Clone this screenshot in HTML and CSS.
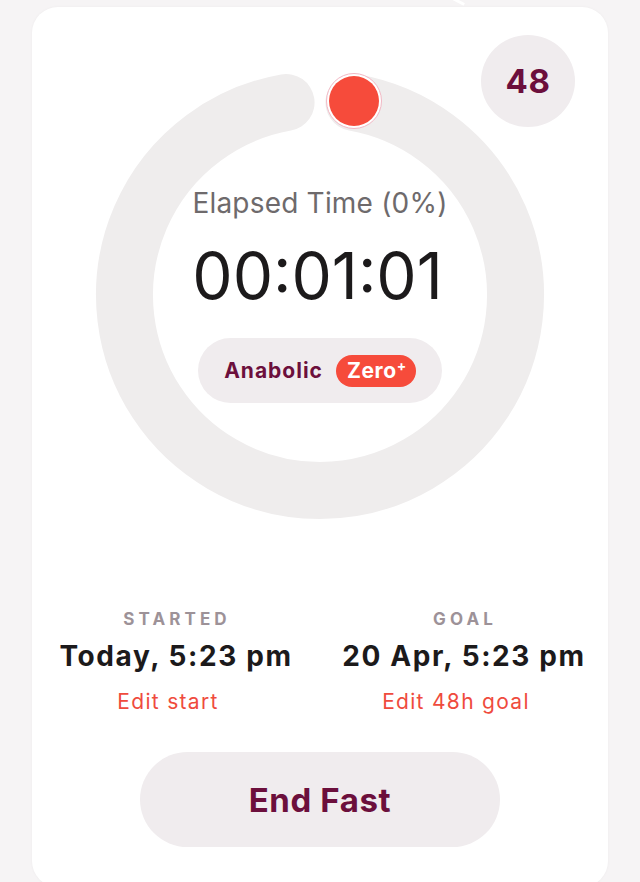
FILE: index.html
```html
<!DOCTYPE html>
<html>
<head>
<meta charset="utf-8">
<link rel="stylesheet" href="styles.css">
</head>
<body>
<div class="streak"></div>
<main class="card">
  <div class="goal-badge">48</div>
  <section class="dial">
    <svg class="ring" width="460" height="460" viewBox="0 0 460 460">
      <path d="M263.95 37.47 A195.5 195.5 0 1 1 196.05 37.47" fill="none" stroke="#efeded" stroke-width="57" stroke-linecap="round"/>
      <circle cx="264" cy="36" r="27.5" fill="#fff" stroke="#f2b8c4" stroke-width="1"/>
      <circle cx="264" cy="36" r="25" fill="#f64b3b"/>
    </svg>
    <div class="dial-info">
      <div class="elapsed">Elapsed Time (0%)</div>
      <div class="clock">00:01:01</div>
      <div class="stage"><span class="stage-name">Anabolic</span><span class="zero">Zero<sup>+</sup></span></div>
    </div>
  </section>
  <section class="times">
    <div class="col">
      <div class="label">STARTED</div>
      <div class="value">Today, 5:23 pm</div>
      <div class="edit">Edit start</div>
    </div>
    <div class="col">
      <div class="label">GOAL</div>
      <div class="value">20 Apr, 5:23 pm</div>
      <div class="edit">Edit 48h goal</div>
    </div>
  </section>
  <button class="end">End Fast</button>
</main>
</body>
</html>
```

FILE: styles.css
```css
* { box-sizing: border-box; }
html, body { margin: 0; padding: 0; }
body {
  background: #f6f4f5;
  font-family: Inter, "Noto Sans", sans-serif;
  width: 640px;
  height: 882px;
  overflow: hidden;
  position: relative;
}
.streak {
  position: absolute;
  left: 436px;
  top: -4px;
  width: 30px;
  height: 3px;
  background: #fff;
  transform: rotate(28deg);
}
.card {
  position: relative;
  margin: 7px 32px 0;
  width: 576px;
  height: 880px;
  background: #fff;
  border-radius: 26px;
  box-shadow: 0 0 3px rgba(0,0,0,0.04);
  display: flex;
  flex-direction: column;
  align-items: center;
}
.goal-badge {
  position: absolute;
  right: 33px;
  top: 28px;
  width: 94px;
  height: 92px;
  border-radius: 50%;
  background: #f0ecee;
  color: #6c0f3c;
  font-weight: 700;
  font-size: 33px;
  letter-spacing: 0.5px;
  display: flex;
  align-items: center;
  justify-content: center;
}
.dial {
  margin-top: 58px;
  display: grid;
  width: 460px;
  height: 460px;
}
.ring, .dial-info { grid-area: 1 / 1; }
.dial-info {
  display: flex;
  flex-direction: column;
  align-items: center;
  padding-top: 122px;
}
.elapsed {
  font-size: 28px;
  color: #6e6a6c;
  line-height: 32px;
  letter-spacing: 0.2px;
}
.clock {
  font-size: 64px;
  color: #1c1a1b;
  line-height: 74px;
  margin-top: 20px;
  margin-right: 5px;
  letter-spacing: 0px;
}
.stage {
  margin-top: 25px;
  width: 244px;
  height: 65px;
  border-radius: 33px;
  background: #f0ecee;
  display: flex;
  align-items: center;
  justify-content: center;
  gap: 13px;
}
.stage-name {
  color: #6c0f3c;
  font-weight: 700;
  font-size: 21px;
  letter-spacing: 1px;
}
.zero {
  background: #f64b3b;
  color: #fff;
  font-weight: 700;
  font-size: 21px;
  letter-spacing: 0.6px;
  height: 32px;
  padding: 0 9px 0 11px;
  border-radius: 16px;
  display: flex;
  align-items: center;
}
.zero sup { font-size: 14px; position: relative; top: -5px; vertical-align: baseline; }
.times {
  margin-top: 84px;
  width: 100%;
  display: grid;
  grid-template-columns: 1fr 1fr;
}
.col {
  display: flex;
  flex-direction: column;
  align-items: center;
}
.label {
  font-size: 17px;
  font-weight: 700;
  letter-spacing: 4.1px;
  margin-right: -2px;
  color: #9d9298;
  line-height: 20px;
}
.value {
  margin-top: 10px;
  font-size: 28px;
  font-weight: 700;
  color: #1c1a1b;
  line-height: 34px;
  letter-spacing: 1.6px;
}
.edit {
  margin-top: 16px;
  margin-right: 16px;
  font-size: 21px;
  color: #ef4b3d;
  line-height: 26px;
  letter-spacing: 1.3px;
}
.end {
  margin-top: 37px;
  width: 360px;
  height: 95px;
  border: none;
  border-radius: 48px;
  background: #f0ecee;
  color: #6c0f3c;
  font-family: Inter, "Noto Sans", sans-serif;
  font-size: 33px;
  font-weight: 700;
  letter-spacing: 0.6px;
}
```
